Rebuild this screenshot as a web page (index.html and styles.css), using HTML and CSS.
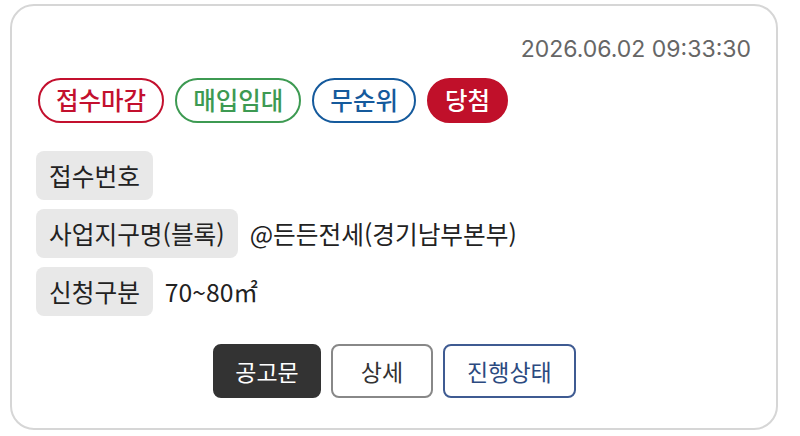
FILE: index.html
```html
<!DOCTYPE html>
<html lang="ko">
<head>
<meta charset="utf-8">
<link rel="stylesheet" href="styles.css">
</head>
<body>
<div class="card">
  <div class="date">2026.06.02 09:33:30</div>
  <div class="badges">
    <span class="badge red">접수마감</span>
    <span class="badge green">매입임대</span>
    <span class="badge blue">무순위</span>
    <span class="badge filled">당첨</span>
  </div>
  <div class="rows">
    <div class="row"><span class="label">접수번호</span></div>
    <div class="row"><span class="label">사업지구명(블록)</span><span class="value">@든든전세(경기남부본부)</span></div>
    <div class="row"><span class="label">신청구분</span><span class="value">70~80㎡</span></div>
  </div>
  <div class="actions">
    <button class="btn dark">공고문</button>
    <button class="btn gray">상세</button>
    <button class="btn navy">진행상태</button>
  </div>
</div>
</body>
</html>
```
FILE: styles.css
```css
* { box-sizing: border-box; }
html, body { margin: 0; padding: 0; background: #fff; }
body {
  font-family: "Noto Sans CJK KR", "Noto Sans", sans-serif;
  color: #222;
  padding: 4px 0 0 10px;
}
.card {
  width: 768px;
  height: 426px;
  border: 2px solid #d6d6d6;
  border-radius: 24px;
  padding: 27px 25px 0 26px;
  display: flex;
  flex-direction: column;
}
.date {
  align-self: flex-end;
  font-family: "Inter", "Noto Sans", sans-serif;
  font-size: 23px;
  line-height: 32px;
  color: #666;
}
.badges {
  display: flex;
  gap: 11px;
  margin-top: 13px;
}
.badge {
  height: 45px;
  border-radius: 23px;
  padding: 0 16px;
  font-size: 24.5px;
  font-weight: 500;
  line-height: 1;
  display: inline-flex;
  align-items: center;
  border: 2px solid;
  background: #fff;
}
.red { color: #c3102e; border-color: #c3102e; }
.green { color: #3d9a52; border-color: #3d9a52; }
.blue { color: #155a9c; border-color: #155a9c; }
.filled { color: #fff; background: #c0102a; border-color: #c0102a; }
.rows {
  display: flex;
  flex-direction: column;
  gap: 9px;
  margin-top: 28px;
}
.row {
  display: flex;
  align-items: center;
  gap: 12px;
}
.label {
  background: #e8e8e8;
  border-radius: 8px;
  height: 49px;
  padding: 0 13px;
  display: inline-flex;
  align-items: center;
  font-size: 24.7px;
  line-height: 1;
  color: #222;
  margin-left: -2px;
}
.value {
  font-size: 24.7px;
  line-height: 1;
  color: #222;
}
.actions {
  display: flex;
  justify-content: center;
  gap: 10px;
  margin-top: 28px;
}
.btn {
  height: 54px;
  border-radius: 8px;
  font-family: "Noto Sans CJK KR", "Noto Sans", sans-serif;
  font-size: 23px;
  line-height: 1;
  padding: 0 20px;
  background: #fff;
  border: 2px solid;
  cursor: pointer;
}
.dark { background: #333; border-color: #333; color: #fff; }
.gray { border-color: #888; color: #333; padding: 0 28px; }
.navy { border-color: #3f5b92; color: #2c4a80; padding: 0 22px; }
```
